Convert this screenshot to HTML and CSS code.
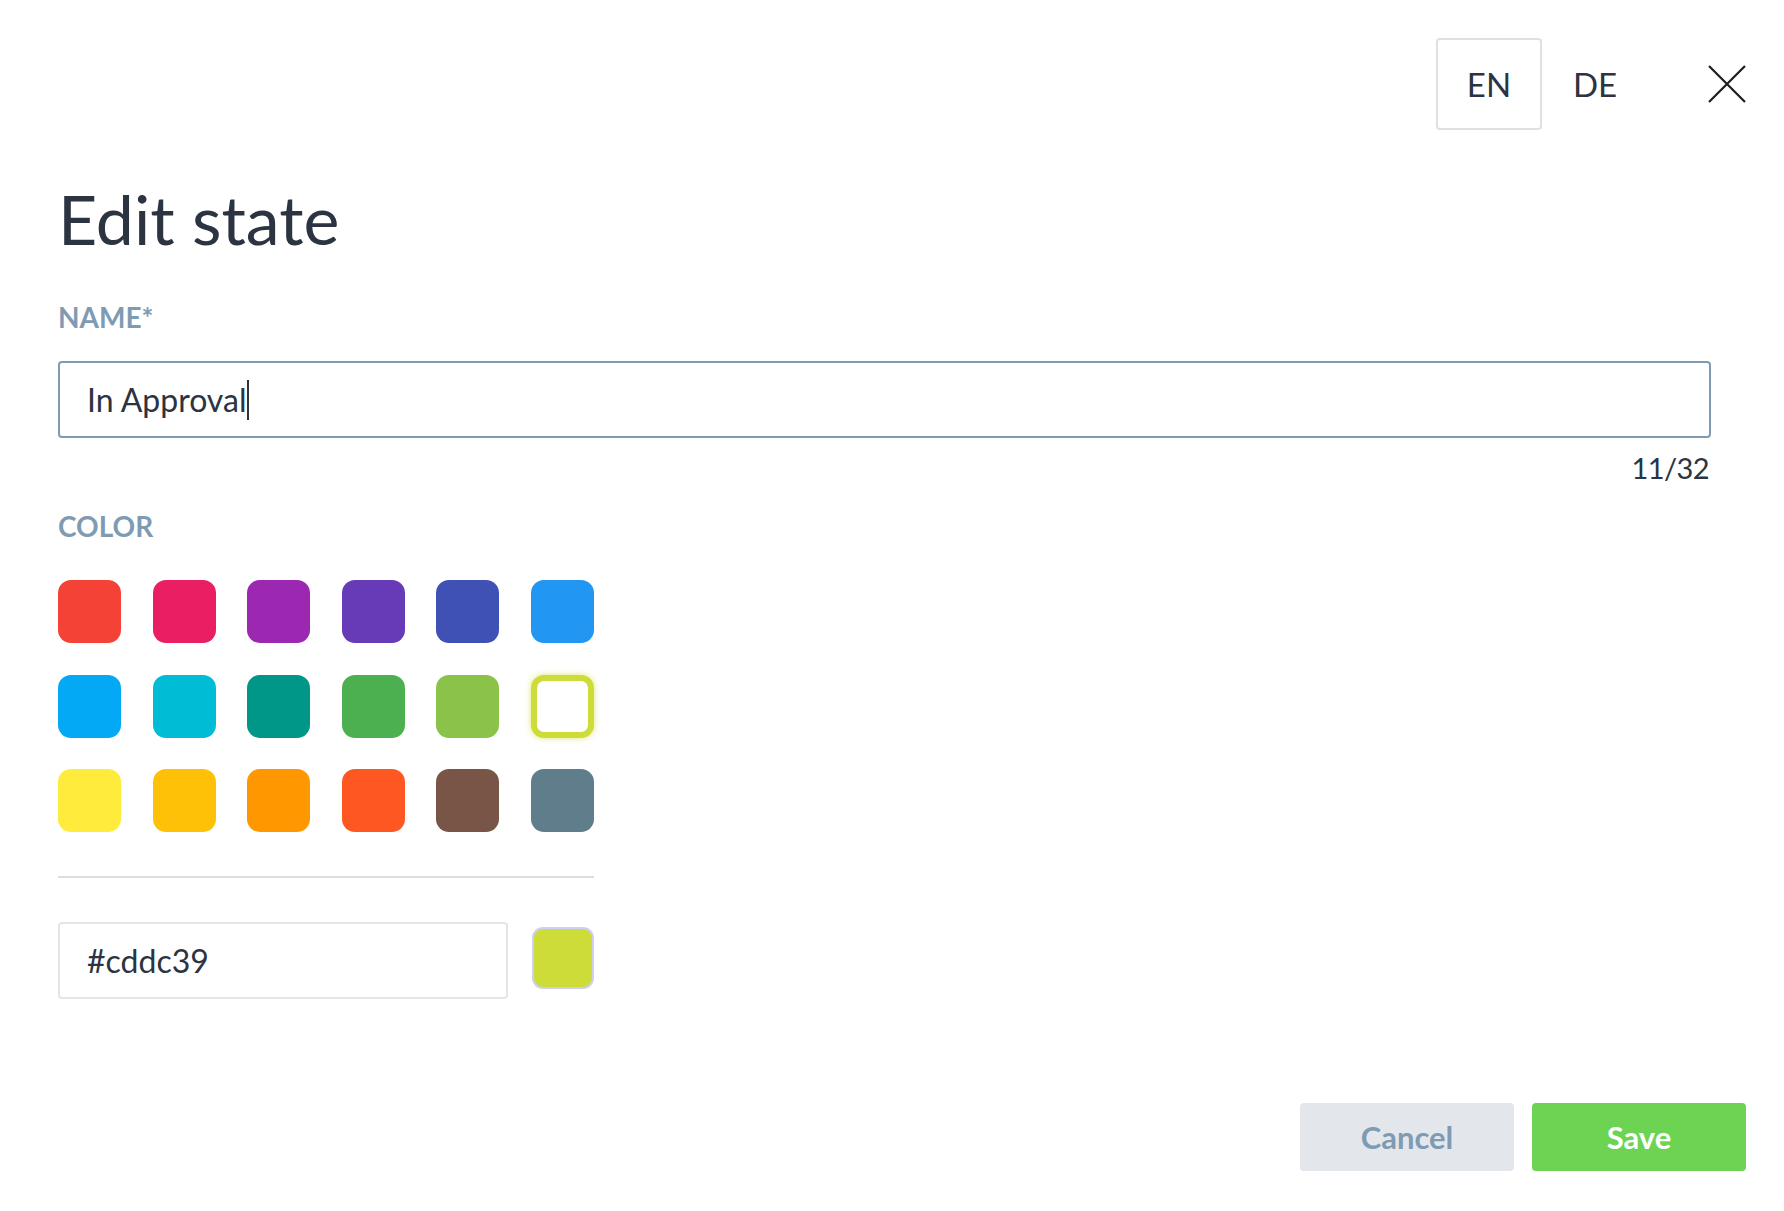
FILE: index.html
```html
<!DOCTYPE html>
<html lang="en">
<head>
<meta charset="utf-8">
<title>Edit state</title>
<link rel="stylesheet" href="styles.css">
</head>
<body>
<div class="dialog">
  <header class="topbar">
    <div class="lang">
      <button class="lang-btn active">EN</button>
      <button class="lang-btn">DE</button>
    </div>
    <button class="close" aria-label="Close">
      <svg width="38" height="38" viewBox="0 0 38 38"><path d="M1 1 L37 37 M37 1 L1 37" stroke="#1e1e1e" stroke-width="2.2" fill="none"/></svg>
    </button>
  </header>
  <main class="form">
    <h1 class="title">Edit state</h1>
    <div class="field-label">NAME*</div>
    <div class="input focused"><span class="value">In Approval</span><span class="caret"></span></div>
    <div class="counter">11/32</div>
    <div class="field-label color-label">COLOR</div>
    <div class="swatches">
      <span class="swatch red"></span>
      <span class="swatch pink"></span>
      <span class="swatch purple"></span>
      <span class="swatch deep-purple"></span>
      <span class="swatch indigo"></span>
      <span class="swatch blue"></span>
      <span class="swatch light-blue"></span>
      <span class="swatch cyan"></span>
      <span class="swatch teal"></span>
      <span class="swatch green"></span>
      <span class="swatch light-green"></span>
      <span class="swatch selected"></span>
      <span class="swatch yellow"></span>
      <span class="swatch amber"></span>
      <span class="swatch orange"></span>
      <span class="swatch deep-orange"></span>
      <span class="swatch brown"></span>
      <span class="swatch blue-grey"></span>
    </div>
    <div class="divider"></div>
    <div class="hex-row">
      <div class="input hex"><span class="value">#cddc39</span></div>
      <span class="preview"></span>
    </div>
  </main>
  <footer class="actions">
    <button class="btn cancel">Cancel</button>
    <button class="btn save">Save</button>
  </footer>
</div>
</body>
</html>
```
FILE: styles.css
```css
* { box-sizing: border-box; }
html, body { margin: 0; padding: 0; background: #fff; }
body {
  font-family: "Lato", "Liberation Sans", sans-serif;
  color: #2b3440;
}
.dialog {
  width: 1784px;
  height: 1211px;
  padding: 38px 38px 0 58px;
}
.topbar {
  display: flex;
  justify-content: flex-end;
  align-items: center;
}
.lang { display: flex; }
.lang-btn {
  width: 106px;
  height: 92px;
  border: 2px solid transparent;
  border-radius: 4px;
  background: #fff;
  font-family: inherit;
  font-size: 33px;
  color: #2b3440;
  padding: 0;
}
.lang-btn.active { border-color: #e0e0e0; }
.close {
  margin-left: 60px;
  width: 38px;
  height: 38px;
  border: 0;
  padding: 0;
  background: none;
  display: flex;
}
.form { padding-right: 35px; }
.title {
  margin: 49px 0 0;
  font-size: 68px;
  line-height: 80px;
  font-weight: 400;
  color: #2b3440;
}
.field-label {
  margin-top: 41px;
  font-size: 28px;
  line-height: 34px;
  font-weight: 700;
  color: #7f9bb3;
}
.input {
  margin-top: 27px;
  height: 77px;
  border: 2px solid #e2e6eb;
  border-radius: 4px;
  display: flex;
  align-items: center;
  padding-left: 27px;
  font-size: 32px;
  color: #2b3440;
}
.input.focused { border-color: #7f9bb3; }
.caret {
  display: inline-block;
  width: 2px;
  height: 40px;
  background: #2b3440;
  margin-left: 1px;
}
.counter {
  margin-top: 12px;
  text-align: right;
  padding-right: 2px;
  font-size: 29px;
  letter-spacing: -0.6px;
  line-height: 36px;
  color: #2b3440;
}
.color-label { margin-top: 23px; }
.swatches {
  margin-top: 37px;
  display: grid;
  grid-template-columns: repeat(6, 63px);
  grid-auto-rows: 63px;
  gap: 31.5px 31.6px;
}
.swatch {
  border-radius: 13px;
}
.red { background: #f44336; }
.pink { background: #e91e63; }
.purple { background: #9c27b0; }
.deep-purple { background: #673ab7; }
.indigo { background: #3f51b5; }
.blue { background: #2196f3; }
.light-blue { background: #03a9f4; }
.cyan { background: #00bcd4; }
.teal { background: #009688; }
.green { background: #4caf50; }
.light-green { background: #8bc34a; }
.selected {
  background: #fff;
  border: 6px solid #cddc39;
  box-shadow: 0 0 6px rgba(205, 220, 57, 0.7);
}
.yellow { background: #ffeb3b; }
.amber { background: #ffc107; }
.orange { background: #ff9800; }
.deep-orange { background: #ff5722; }
.brown { background: #795548; }
.blue-grey { background: #607d8b; }
.divider {
  margin-top: 44px;
  width: 536px;
  height: 2px;
  background: #dedede;
}
.hex-row {
  margin-top: 44px;
  width: 536px;
  display: flex;
  align-items: flex-start;
  gap: 24px;
}
.hex-row .input { margin-top: 0; flex: 1; }
.preview {
  margin-top: 5px;
  width: 62px;
  height: 62px;
  border-radius: 11px;
  border: 2px solid #cdd0f2;
  background: #cddc39;
}
.actions {
  margin-top: 104px;
  display: flex;
  justify-content: flex-end;
  gap: 18px;
}
.btn {
  width: 214px;
  height: 68px;
  border: 0;
  border-radius: 4px;
  font-family: inherit;
  font-size: 31px;
  font-weight: 700;
  padding: 0;
}
.cancel { background: #e3e7ec; color: #7f9bb3; }
.save { background: #6cd452; color: #fff; }
```
